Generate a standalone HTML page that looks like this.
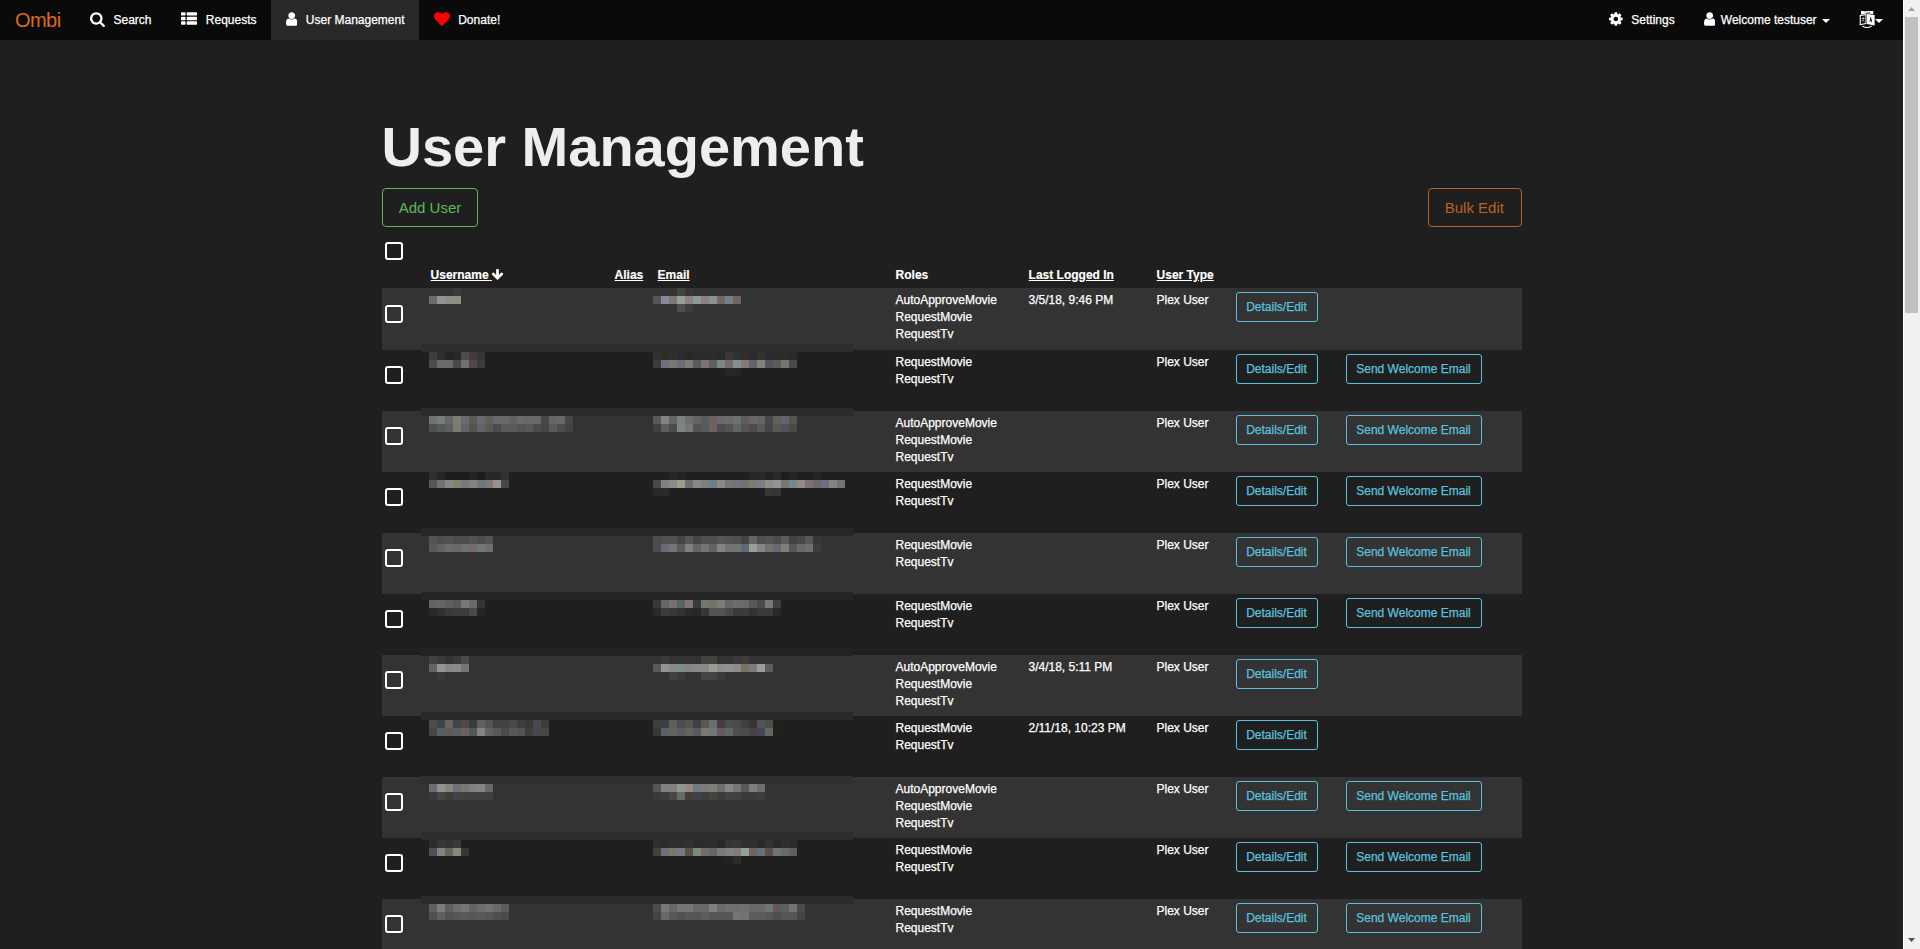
<!DOCTYPE html>
<html lang="en">
<head>
<meta charset="utf-8">
<title>Ombi - User Management</title>
<style>
*{box-sizing:border-box}
html,body{margin:0;padding:0}
html{overflow:hidden}
body{width:1920px;height:949px;overflow:hidden;background:#1f1f1f;color:#fff;font-family:"Liberation Sans",Arial,Helvetica,sans-serif;font-size:12px;line-height:17px;position:relative}
a{color:inherit;text-decoration:none}
#nav .it,#tbl{-webkit-text-stroke:.25px currentColor}
#tbl th{-webkit-text-stroke:.15px currentColor}
/* navbar */
#nav{position:absolute;left:0;top:0;width:1903px;height:40px;background:#0a0a0a}
#nav .brand{position:absolute;left:15px;top:0;height:40px;line-height:40px;font-size:20px;letter-spacing:-.55px;color:#df691a}
#nav .it{position:absolute;top:0;height:40px;line-height:40px;font-size:12px;color:#fff;white-space:nowrap}
#nav .it.active{background:#282828}
#nav .it span{position:absolute;top:0;left:0}
#nav svg{position:absolute;display:block;fill:#fff}
#nav .caret{position:absolute;top:19px;width:0;height:0;border-top:4px solid #fff;border-left:4px solid transparent;border-right:4px solid transparent}
/* scrollbar */
#sb{position:absolute;left:1903px;top:0;width:17px;height:949px;background:#f1f1f1;border-left:1px solid #fff}
#sb .thumb{position:absolute;left:1px;top:17px;width:13px;height:296px;background:#c1c1c1}
#sb svg{position:absolute;left:4px}
/* page */
h1{position:absolute;left:381.5px;top:114px;margin:0;font-size:56px;line-height:66px;font-weight:bold;color:#eee;white-space:nowrap}
.btn{position:absolute;display:block;border:1px solid;border-radius:4px;font-size:15px;text-align:center;background:transparent}
#add{left:382px;top:188px;width:96px;height:39px;line-height:37px;color:#5cb85c;border-color:#5cb85c}
#bulk{left:1428px;top:188px;width:94px;height:39px;line-height:37px;padding-right:1.4px;color:#bd6020;border-color:#bd6020}
.cb{position:absolute;left:385px;width:18px;height:18px;border:2px solid #fff;border-radius:3px}
.cbx{display:block;width:18px;height:18px;border:2px solid #fff;border-radius:3px;margin:12px 0 0 -5.5px}
tr.r1 .cbx{margin-top:13px}
/* table */
#tbl{position:absolute;left:381.5px;top:236px;width:1140px;border-collapse:collapse;table-layout:fixed;font-size:12px;line-height:17px}
#tbl th,#tbl td{padding:0 0 0 8px;vertical-align:top;text-align:left;font-weight:normal;overflow:hidden;white-space:nowrap}
#tbl th{font-weight:bold;height:52px;vertical-align:bottom;padding-bottom:4px;padding-left:9.1px}
#tbl th a{text-decoration:underline}
#tbl td{padding-top:4px;padding-left:9px}
#tbl td.b{padding-left:8px}
#tbl tr.r{height:61px}
#tbl tr.r1{height:62px}
#tbl tr.o{background:#333}
.sm{display:inline-block;height:30px;line-height:28px;border:1px solid #5bc0de;border-radius:3px;color:#5bc0de;font-size:12px;padding:0;margin-top:0;text-align:center;width:82px}
.sm.w{width:136px}
#mz{position:absolute;left:421px;top:288px;display:block}
</style>
</head>
<body>
<div id="nav">
  <a class="brand">Ombi</a>
<a class="it" style="left:75px;width:91px"><svg viewBox="0 0 1664 1792" width="14.86" height="16" style="left:15.0px;top:11px"><path d="M1152 832q0-185-131.500-316.500t-316.500-131.500-316.500 131.500-131.500 316.500 131.500 316.500 316.500 131.500 316.500-131.500 131.500-316.500zM1664 1664q0 52-38 90t-90 38q-54 0-90-38l-343-342q-179 124-399 124-143 0-273.500-55.500t-225-150-150-225-55.500-273.500 55.500-273.500 150-225 225-150 273.500-55.500 273.500 55.500 225 150 150 225 55.500 273.500q0 220-124 399l343 343q37 37 37 90z"/></svg><span style="left:38.5px">Search</span></a>
<a class="it" style="left:166px;width:105px"><svg viewBox="0 0 1792 1792" width="16.00" height="16" style="left:15.0px;top:11px"><path d="M512 1248v192q0 40-28 68t-68 28h-320q-40 0-68-28t-28-68v-192q0-40 28-68t68-28h320q40 0 68 28t28 68zM512 736v192q0 40-28 68t-68 28h-320q-40 0-68-28t-28-68v-192q0-40 28-68t68-28h320q40 0 68 28t28 68zM1792 1248v192q0 40-28 68t-68 28h-960q-40 0-68-28t-28-68v-192q0-40 28-68t68-28h960q40 0 68 28t28 68zM512 224v192q0 40-28 68t-68 28h-320q-40 0-68-28t-28-68v-192q0-40 28-68t68-28h320q40 0 68 28t28 68zM1792 736v192q0 40-28 68t-68 28h-960q-40 0-68-28t-28-68v-192q0-40 28-68t68-28h960q40 0 68 28t28 68zM1792 224v192q0 40-28 68t-68 28h-960q-40 0-68-28t-28-68v-192q0-40 28-68t68-28h960q40 0 68 28t28 68z"/></svg><span style="left:39.8px">Requests</span></a>
<a class="it active" style="left:271px;width:148px"><svg viewBox="0 0 1280 1792" width="11.43" height="16" style="left:15.0px;top:11px"><path d="M1280 1399q0 109-62.500 187t-150.500 78h-854q-88 0-150.500-78t-62.500-187q0-85 8.500-160.500t31.500-152 58.500-131 94-89 134.500-34.500q131 128 313 128t313-128q76 0 134.500 34.500t94 89 58.500 131 31.500 152 8.500 160.500zM1024 512q0 159-112.500 271.500t-271.500 112.500-271.500-112.500-112.500-271.500 112.500-271.500 271.500-112.500 271.500 112.500 112.500 271.500z"/></svg><span style="left:34.8px">User Management</span></a>
<a class="it" style="left:419px;width:96px"><svg viewBox="0 0 1792 1792" width="16.00" height="16" style="left:15.0px;top:11px;fill:#f00"><path d="M896 1664q-26 0-44-18l-624-602q-10-8-27.500-26t-55.500-65.500-68-97.500-53.500-121-23.500-138q0-220 127-344t351-124q62 0 126.500 21.500t120 58 95.500 68.500 76 68q36-36 76-68t95.500-68.500 120-58 126.500-21.500q224 0 351 124t127 344q0 221-229 450l-623 600q-18 18-44 18z"/></svg><span style="left:39.2px">Donate!</span></a>
<a class="it" style="left:1594px;width:95px"><svg viewBox="0 0 1536 1792" width="13.71" height="16" style="left:15.0px;top:11px"><path d="M1024 896q0-106-75-181t-181-75-181 75-75 181 75 181 181 75 181-75 75-181zM1536 787v222q0 12-8 23t-20 13l-185 28q-19 54-39 91 35 50 107 138 10 12 10 25t-9 23q-27 37-99 108t-94 71q-12 0-26-9l-138-108q-44 23-91 38-16 136-29 186-7 28-36 28h-222q-14 0-24.500-8.500t-11.500-21.500l-28-184q-49-16-90-37l-141 107q-10 9-25 9-14 0-25-11-126-114-165-168-7-10-7-23 0-12 8-23 15-21 51-66.500t54-70.500q-27-50-41-99l-183-27q-13-2-21-12.500t-8-23.500v-222q0-12 8-23t19-13l186-28q14-46 39-92-40-57-107-138-10-12-10-24 0-10 9-23 26-36 98.500-107.500t94.500-71.500q13 0 26 10l138 107q44-23 91-38 16-136 29-186 7-28 36-28h222q14 0 24.500 8.500t11.500 21.500l28 184q49 16 90 37l142-107q9-9 24-9 13 0 25 10 129 119 165 170 7 8 7 22 0 12-8 23-15 21-51 66.500t-54 70.500q26 50 41 98l183 28q13 2 21 12.500t8 23.500z"/></svg><span style="left:37.3px">Settings</span></a>
<a class="it" style="left:1689px;width:156px"><svg viewBox="0 0 1280 1792" width="11.43" height="16" style="left:15.0px;top:11px"><path d="M1280 1399q0 109-62.500 187t-150.500 78h-854q-88 0-150.500-78t-62.500-187q0-85 8.500-160.500t31.500-152 58.500-131 94-89 134.500-34.500q131 128 313 128t313-128q76 0 134.500 34.500t94 89 58.500 131 31.500 152 8.500 160.500zM1024 512q0 159-112.500 271.500t-271.500 112.500-271.500-112.500-112.500-271.500 112.500-271.500 271.500-112.500 271.500 112.500 112.500 271.500z"/></svg><span style="left:31.8px">Welcome testuser</span><b class="caret" style="left:133px"></b></a>
<a class="it" style="left:1845px;width:58px"><svg viewBox="0 0 16 18" width="16" height="18" style="left:13.5px;top:10.3px"><path d="M2 1.1 L14.2 1.1 L14.2 4.2 L8.3 3.2 L2 4.4Z M4 1.1 L4.9 1.1 L11.6 2.7 L10.6 3Z" fill-rule="evenodd"/><path d="M8 3.9 L15.6 5.1 L15.6 15.4 L8 14Z M10.5 11.9 L11.8 6.2 L13.2 12.3 L12.5 12.2 L12.2 10.9 L11.4 10.8 L11.15 12Z" fill-rule="evenodd"/><path d="M0.7 5.1 L7.5 4 L7.5 13.9 L0.7 15.2Z M1.8 6 L1.8 13.9 L6.5 13 L6.5 5.2Z" fill-rule="evenodd"/><path d="M2.6 8.3 L5.8 7.7 L5.8 8.4 L2.6 9Z M4.6 6.7 L5.3 6.6 L4.4 10.1 L3.2 11.7 L2.8 11.3 L3.9 9.7Z M3 9.7 L5.6 11.1 L5.4 11.7 L2.8 10.3Z" opacity=".8"/><path d="M3.6 15.6 Q8 18.6 12.4 15.6 L12.9 16.4 Q8 19.6 3.1 16.4Z"/></svg><b class="caret" style="left:30px"></b></a>
</div>
<div id="sb"><div class="thumb"></div><svg width="7" height="4" style="top:7px" viewBox="0 0 8 4" preserveAspectRatio="none"><path d="M0 4L4 0L8 4Z" fill="#a3a3a3"/></svg><svg width="7" height="4" style="top:938px" viewBox="0 0 8 4" preserveAspectRatio="none"><path d="M0 0L4 4L8 0Z" fill="#505050"/></svg></div>
<h1>User Management</h1>
<a class="btn" id="add">Add User</a>
<a class="btn" id="bulk">Bulk Edit</a>
<span class="cb" style="top:242px"></span>
<table id="tbl">
<colgroup><col style="width:40px"><col style="width:184px"><col style="width:43px"><col style="width:238px"><col style="width:133px"><col style="width:128px"><col style="width:80px"><col style="width:110px"><col style="width:184px"></colgroup>
<thead><tr><th></th><th><a>Username </a><svg viewBox="0 0 1792 1792" width="13" height="13" style="fill:#fff;vertical-align:-2.4px;margin-left:-1.2px"><path d="M1675 832q0 53-37 90l-651 652q-39 37-91 37-53 0-90-37l-651-652q-38-36-38-90 0-53 38-91l74-75q39-37 91-37 53 0 90 37l294 294v-704q0-52 38-90t90-38h128q52 0 90 38t38 90v704l294-294q37-37 90-37 52 0 91 37l75 75q37 39 37 91z"/></svg></th><th><a>Alias</a></th><th><a>Email</a></th><th>Roles</th><th><a>Last Logged In</a></th><th><a>User Type</a></th><th></th><th></th></tr></thead>
<tbody id="tb">
<tr class="r r1 o"><td><span class="cbx"></span></td><td></td><td></td><td></td><td><div>AutoApproveMovie</div><div>RequestMovie</div><div>RequestTv</div></td><td>3/5/18, 9:46 PM</td><td>Plex User</td><td class="b"><a class="sm">Details/Edit</a></td><td></td></tr>
<tr class="r"><td><span class="cbx"></span></td><td></td><td></td><td></td><td><div>RequestMovie</div><div>RequestTv</div></td><td></td><td>Plex User</td><td class="b"><a class="sm">Details/Edit</a></td><td class="b"><a class="sm w">Send Welcome Email</a></td></tr>
<tr class="r o"><td><span class="cbx"></span></td><td></td><td></td><td></td><td><div>AutoApproveMovie</div><div>RequestMovie</div><div>RequestTv</div></td><td></td><td>Plex User</td><td class="b"><a class="sm">Details/Edit</a></td><td class="b"><a class="sm w">Send Welcome Email</a></td></tr>
<tr class="r"><td><span class="cbx"></span></td><td></td><td></td><td></td><td><div>RequestMovie</div><div>RequestTv</div></td><td></td><td>Plex User</td><td class="b"><a class="sm">Details/Edit</a></td><td class="b"><a class="sm w">Send Welcome Email</a></td></tr>
<tr class="r o"><td><span class="cbx"></span></td><td></td><td></td><td></td><td><div>RequestMovie</div><div>RequestTv</div></td><td></td><td>Plex User</td><td class="b"><a class="sm">Details/Edit</a></td><td class="b"><a class="sm w">Send Welcome Email</a></td></tr>
<tr class="r"><td><span class="cbx"></span></td><td></td><td></td><td></td><td><div>RequestMovie</div><div>RequestTv</div></td><td></td><td>Plex User</td><td class="b"><a class="sm">Details/Edit</a></td><td class="b"><a class="sm w">Send Welcome Email</a></td></tr>
<tr class="r o"><td><span class="cbx"></span></td><td></td><td></td><td></td><td><div>AutoApproveMovie</div><div>RequestMovie</div><div>RequestTv</div></td><td>3/4/18, 5:11 PM</td><td>Plex User</td><td class="b"><a class="sm">Details/Edit</a></td><td></td></tr>
<tr class="r"><td><span class="cbx"></span></td><td></td><td></td><td></td><td><div>RequestMovie</div><div>RequestTv</div></td><td>2/11/18, 10:23 PM</td><td>Plex User</td><td class="b"><a class="sm">Details/Edit</a></td><td></td></tr>
<tr class="r o"><td><span class="cbx"></span></td><td></td><td></td><td></td><td><div>AutoApproveMovie</div><div>RequestMovie</div><div>RequestTv</div></td><td></td><td>Plex User</td><td class="b"><a class="sm">Details/Edit</a></td><td class="b"><a class="sm w">Send Welcome Email</a></td></tr>
<tr class="r"><td><span class="cbx"></span></td><td></td><td></td><td></td><td><div>RequestMovie</div><div>RequestTv</div></td><td></td><td>Plex User</td><td class="b"><a class="sm">Details/Edit</a></td><td class="b"><a class="sm w">Send Welcome Email</a></td></tr>
<tr class="r o"><td><span class="cbx"></span></td><td></td><td></td><td></td><td><div>RequestMovie</div><div>RequestTv</div></td><td></td><td>Plex User</td><td class="b"><a class="sm">Details/Edit</a></td><td class="b"><a class="sm w">Send Welcome Email</a></td></tr>
</tbody>
</table>
<svg id="mz" width="432" height="661" viewBox="0 0 432 661" shape-rendering="crispEdges"><rect x="0" y="56" width="432" height="8" fill="#2e2e2e"/><rect x="0" y="120" width="432" height="8" fill="#2c2c2c"/><rect x="0" y="240" width="432" height="8" fill="#262626"/><rect x="0" y="304" width="432" height="8" fill="#242424"/><rect x="0" y="360" width="432" height="8" fill="#222222"/><rect x="0" y="424" width="432" height="8" fill="#292929"/><rect x="0" y="488" width="432" height="8" fill="#303030"/><rect x="0" y="544" width="432" height="8" fill="#2e2e2e"/><rect x="0" y="608" width="432" height="8" fill="#2c2c2c"/><rect x="32" y="0" width="8" height="8" fill="#3a3a3a"/><rect x="8" y="8" width="8" height="8" fill="#6b6b6d"/><rect x="16" y="8" width="8" height="8" fill="#8b9497"/><rect x="24" y="8" width="8" height="8" fill="#938b88"/><rect x="32" y="8" width="8" height="8" fill="#8d8f87"/><rect x="256" y="0" width="8" height="8" fill="#424443"/><rect x="264" y="0" width="8" height="8" fill="#393735"/><rect x="232" y="8" width="8" height="8" fill="#555557"/><rect x="240" y="8" width="8" height="8" fill="#858a96"/><rect x="248" y="8" width="8" height="8" fill="#7d7672"/><rect x="256" y="8" width="8" height="8" fill="#96a099"/><rect x="264" y="8" width="8" height="8" fill="#888284"/><rect x="272" y="8" width="8" height="8" fill="#8d9994"/><rect x="280" y="8" width="8" height="8" fill="#8b7f7f"/><rect x="288" y="8" width="8" height="8" fill="#8c908f"/><rect x="296" y="8" width="8" height="8" fill="#726764"/><rect x="304" y="8" width="8" height="8" fill="#767e89"/><rect x="312" y="8" width="8" height="8" fill="#72645f"/><rect x="256" y="16" width="8" height="8" fill="#4c4e4f"/><rect x="264" y="16" width="8" height="8" fill="#403e3b"/><rect x="8" y="64" width="8" height="8" fill="#3d3d3d"/><rect x="16" y="64" width="8" height="8" fill="#2f2f2d"/><rect x="24" y="64" width="8" height="8" fill="#262324"/><rect x="32" y="64" width="8" height="8" fill="#28282a"/><rect x="40" y="64" width="8" height="8" fill="#4a4c4b"/><rect x="48" y="64" width="8" height="8" fill="#3f3d3b"/><rect x="56" y="64" width="8" height="8" fill="#373737"/><rect x="8" y="72" width="8" height="8" fill="#514c4b"/><rect x="16" y="72" width="8" height="8" fill="#69696f"/><rect x="24" y="72" width="8" height="8" fill="#6a6a68"/><rect x="32" y="72" width="8" height="8" fill="#484a4f"/><rect x="40" y="72" width="8" height="8" fill="#6e7271"/><rect x="48" y="72" width="8" height="8" fill="#524745"/><rect x="56" y="72" width="8" height="8" fill="#3c3a3d"/><rect x="232" y="64" width="8" height="8" fill="#2d3333"/><rect x="240" y="64" width="8" height="8" fill="#2d2d29"/><rect x="248" y="64" width="8" height="8" fill="#302e2e"/><rect x="256" y="64" width="8" height="8" fill="#2b2b2b"/><rect x="264" y="64" width="8" height="8" fill="#292927"/><rect x="272" y="64" width="8" height="8" fill="#2b2b2b"/><rect x="280" y="64" width="8" height="8" fill="#2a2b2d"/><rect x="288" y="64" width="8" height="8" fill="#2c2b2a"/><rect x="296" y="64" width="8" height="8" fill="#282a29"/><rect x="304" y="64" width="8" height="8" fill="#373735"/><rect x="312" y="64" width="8" height="8" fill="#303231"/><rect x="320" y="64" width="8" height="8" fill="#2e2e2e"/><rect x="328" y="64" width="8" height="8" fill="#2b2b2b"/><rect x="336" y="64" width="8" height="8" fill="#333331"/><rect x="344" y="64" width="8" height="8" fill="#2b2b2d"/><rect x="352" y="64" width="8" height="8" fill="#2b2b2b"/><rect x="360" y="64" width="8" height="8" fill="#2c2c2c"/><rect x="368" y="64" width="8" height="8" fill="#2a2a2a"/><rect x="232" y="72" width="8" height="8" fill="#3a3c3b"/><rect x="240" y="72" width="8" height="8" fill="#6e717c"/><rect x="248" y="72" width="8" height="8" fill="#7a756f"/><rect x="256" y="72" width="8" height="8" fill="#6b6d72"/><rect x="264" y="72" width="8" height="8" fill="#7c7c70"/><rect x="272" y="72" width="8" height="8" fill="#5b5a5f"/><rect x="280" y="72" width="8" height="8" fill="#7a766d"/><rect x="288" y="72" width="8" height="8" fill="#605f64"/><rect x="296" y="72" width="8" height="8" fill="#7a8a80"/><rect x="304" y="72" width="8" height="8" fill="#756c6d"/><rect x="312" y="72" width="8" height="8" fill="#848d94"/><rect x="320" y="72" width="8" height="8" fill="#857a76"/><rect x="328" y="72" width="8" height="8" fill="#63656a"/><rect x="336" y="72" width="8" height="8" fill="#85807a"/><rect x="344" y="72" width="8" height="8" fill="#525662"/><rect x="352" y="72" width="8" height="8" fill="#625855"/><rect x="360" y="72" width="8" height="8" fill="#727676"/><rect x="368" y="72" width="8" height="8" fill="#514845"/><rect x="304" y="80" width="8" height="8" fill="#23262a"/><rect x="312" y="80" width="8" height="8" fill="#282526"/><rect x="8" y="128" width="8" height="8" fill="#6f7373"/><rect x="16" y="128" width="8" height="8" fill="#787c7c"/><rect x="24" y="128" width="8" height="8" fill="#686868"/><rect x="32" y="128" width="8" height="8" fill="#7b7d76"/><rect x="40" y="128" width="8" height="8" fill="#676b6b"/><rect x="48" y="128" width="8" height="8" fill="#5e5a56"/><rect x="56" y="128" width="8" height="8" fill="#686a6e"/><rect x="64" y="128" width="8" height="8" fill="#5f5f5b"/><rect x="72" y="128" width="8" height="8" fill="#69696b"/><rect x="80" y="128" width="8" height="8" fill="#686a69"/><rect x="88" y="128" width="8" height="8" fill="#5d6265"/><rect x="96" y="128" width="8" height="8" fill="#6a6a68"/><rect x="104" y="128" width="8" height="8" fill="#6a6866"/><rect x="112" y="128" width="8" height="8" fill="#686868"/><rect x="120" y="128" width="8" height="8" fill="#484848"/><rect x="128" y="128" width="8" height="8" fill="#636767"/><rect x="136" y="128" width="8" height="8" fill="#696866"/><rect x="144" y="128" width="8" height="8" fill="#464644"/><rect x="8" y="136" width="8" height="8" fill="#4e504f"/><rect x="16" y="136" width="8" height="8" fill="#555958"/><rect x="24" y="136" width="8" height="8" fill="#5f5e62"/><rect x="32" y="136" width="8" height="8" fill="#7a7c73"/><rect x="40" y="136" width="8" height="8" fill="#646466"/><rect x="48" y="136" width="8" height="8" fill="#57534f"/><rect x="56" y="136" width="8" height="8" fill="#61656a"/><rect x="64" y="136" width="8" height="8" fill="#595955"/><rect x="72" y="136" width="8" height="8" fill="#4a4b50"/><rect x="80" y="136" width="8" height="8" fill="#595955"/><rect x="88" y="136" width="8" height="8" fill="#595b5a"/><rect x="96" y="136" width="8" height="8" fill="#545454"/><rect x="104" y="136" width="8" height="8" fill="#585858"/><rect x="112" y="136" width="8" height="8" fill="#4e4c4a"/><rect x="120" y="136" width="8" height="8" fill="#454746"/><rect x="128" y="136" width="8" height="8" fill="#5a5c5b"/><rect x="136" y="136" width="8" height="8" fill="#4f4c49"/><rect x="144" y="136" width="8" height="8" fill="#414342"/><rect x="232" y="128" width="8" height="8" fill="#555b5b"/><rect x="240" y="128" width="8" height="8" fill="#838383"/><rect x="248" y="128" width="8" height="8" fill="#656366"/><rect x="256" y="128" width="8" height="8" fill="#7a827f"/><rect x="264" y="128" width="8" height="8" fill="#6e6e6c"/><rect x="272" y="128" width="8" height="8" fill="#666360"/><rect x="280" y="128" width="8" height="8" fill="#595c5f"/><rect x="288" y="128" width="8" height="8" fill="#6b6260"/><rect x="296" y="128" width="8" height="8" fill="#69696b"/><rect x="304" y="128" width="8" height="8" fill="#6b6b69"/><rect x="312" y="128" width="8" height="8" fill="#6a7273"/><rect x="320" y="128" width="8" height="8" fill="#5f5c5d"/><rect x="328" y="128" width="8" height="8" fill="#68686a"/><rect x="336" y="128" width="8" height="8" fill="#646464"/><rect x="344" y="128" width="8" height="8" fill="#47484a"/><rect x="352" y="128" width="8" height="8" fill="#62605b"/><rect x="360" y="128" width="8" height="8" fill="#646369"/><rect x="368" y="128" width="8" height="8" fill="#57554f"/><rect x="232" y="136" width="8" height="8" fill="#3e403f"/><rect x="240" y="136" width="8" height="8" fill="#5e5e5c"/><rect x="248" y="136" width="8" height="8" fill="#4c4c4e"/><rect x="256" y="136" width="8" height="8" fill="#80867f"/><rect x="264" y="136" width="8" height="8" fill="#777773"/><rect x="272" y="136" width="8" height="8" fill="#555354"/><rect x="280" y="136" width="8" height="8" fill="#555a5d"/><rect x="288" y="136" width="8" height="8" fill="#6c6360"/><rect x="296" y="136" width="8" height="8" fill="#4d4e50"/><rect x="304" y="136" width="8" height="8" fill="#545256"/><rect x="312" y="136" width="8" height="8" fill="#636561"/><rect x="320" y="136" width="8" height="8" fill="#5a5252"/><rect x="328" y="136" width="8" height="8" fill="#4b4b4b"/><rect x="336" y="136" width="8" height="8" fill="#59595b"/><rect x="344" y="136" width="8" height="8" fill="#434748"/><rect x="352" y="136" width="8" height="8" fill="#595955"/><rect x="360" y="136" width="8" height="8" fill="#525156"/><rect x="368" y="136" width="8" height="8" fill="#4a4a44"/><rect x="8" y="184" width="8" height="8" fill="#2d2f31"/><rect x="16" y="184" width="8" height="8" fill="#262624"/><rect x="24" y="184" width="8" height="8" fill="#1c1c1c"/><rect x="32" y="184" width="8" height="8" fill="#1c1c1c"/><rect x="40" y="184" width="8" height="8" fill="#1d1d1d"/><rect x="48" y="184" width="8" height="8" fill="#222222"/><rect x="56" y="184" width="8" height="8" fill="#1b1b1b"/><rect x="64" y="184" width="8" height="8" fill="#262827"/><rect x="72" y="184" width="8" height="8" fill="#272826"/><rect x="80" y="184" width="8" height="8" fill="#303231"/><rect x="8" y="192" width="8" height="8" fill="#5a5553"/><rect x="16" y="192" width="8" height="8" fill="#707173"/><rect x="24" y="192" width="8" height="8" fill="#82878d"/><rect x="32" y="192" width="8" height="8" fill="#888070"/><rect x="40" y="192" width="8" height="8" fill="#767a7b"/><rect x="48" y="192" width="8" height="8" fill="#868282"/><rect x="56" y="192" width="8" height="8" fill="#70797c"/><rect x="64" y="192" width="8" height="8" fill="#7c7a7d"/><rect x="72" y="192" width="8" height="8" fill="#9a9289"/><rect x="80" y="192" width="8" height="8" fill="#484848"/><rect x="248" y="184" width="8" height="8" fill="#25272a"/><rect x="256" y="184" width="8" height="8" fill="#232320"/><rect x="328" y="184" width="8" height="8" fill="#252826"/><rect x="336" y="184" width="8" height="8" fill="#282826"/><rect x="344" y="184" width="8" height="8" fill="#232323"/><rect x="352" y="184" width="8" height="8" fill="#292926"/><rect x="360" y="184" width="8" height="8" fill="#1d1d1d"/><rect x="368" y="184" width="8" height="8" fill="#222524"/><rect x="376" y="184" width="8" height="8" fill="#1e1e1e"/><rect x="384" y="184" width="8" height="8" fill="#1e1e1e"/><rect x="392" y="184" width="8" height="8" fill="#262626"/><rect x="232" y="192" width="8" height="8" fill="#48484a"/><rect x="240" y="192" width="8" height="8" fill="#7e8286"/><rect x="248" y="192" width="8" height="8" fill="#8b8b85"/><rect x="256" y="192" width="8" height="8" fill="#9e9c8d"/><rect x="264" y="192" width="8" height="8" fill="#6f6e74"/><rect x="272" y="192" width="8" height="8" fill="#868985"/><rect x="280" y="192" width="8" height="8" fill="#827d77"/><rect x="288" y="192" width="8" height="8" fill="#6f7f89"/><rect x="296" y="192" width="8" height="8" fill="#8e8a87"/><rect x="304" y="192" width="8" height="8" fill="#7a7570"/><rect x="312" y="192" width="8" height="8" fill="#73727f"/><rect x="320" y="192" width="8" height="8" fill="#72716c"/><rect x="328" y="192" width="8" height="8" fill="#7b7d78"/><rect x="336" y="192" width="8" height="8" fill="#7c7e87"/><rect x="344" y="192" width="8" height="8" fill="#938c82"/><rect x="352" y="192" width="8" height="8" fill="#8e9699"/><rect x="360" y="192" width="8" height="8" fill="#7d7772"/><rect x="368" y="192" width="8" height="8" fill="#738a92"/><rect x="376" y="192" width="8" height="8" fill="#8f8d88"/><rect x="384" y="192" width="8" height="8" fill="#807074"/><rect x="392" y="192" width="8" height="8" fill="#6c6a6b"/><rect x="400" y="192" width="8" height="8" fill="#6a7280"/><rect x="408" y="192" width="8" height="8" fill="#8a847a"/><rect x="416" y="192" width="8" height="8" fill="#747474"/><rect x="232" y="200" width="8" height="8" fill="#272a29"/><rect x="240" y="200" width="8" height="8" fill="#2a2a26"/><rect x="344" y="200" width="8" height="8" fill="#373737"/><rect x="352" y="200" width="8" height="8" fill="#363533"/><rect x="8" y="248" width="8" height="8" fill="#545454"/><rect x="16" y="248" width="8" height="8" fill="#4f4f4f"/><rect x="24" y="248" width="8" height="8" fill="#525252"/><rect x="32" y="248" width="8" height="8" fill="#4d4d49"/><rect x="40" y="248" width="8" height="8" fill="#494d4d"/><rect x="48" y="248" width="8" height="8" fill="#55514e"/><rect x="56" y="248" width="8" height="8" fill="#4c4d4f"/><rect x="64" y="248" width="8" height="8" fill="#565452"/><rect x="8" y="256" width="8" height="8" fill="#5a5858"/><rect x="16" y="256" width="8" height="8" fill="#616267"/><rect x="24" y="256" width="8" height="8" fill="#6c6b70"/><rect x="32" y="256" width="8" height="8" fill="#696a62"/><rect x="40" y="256" width="8" height="8" fill="#6a7274"/><rect x="48" y="256" width="8" height="8" fill="#756a6c"/><rect x="56" y="256" width="8" height="8" fill="#73767b"/><rect x="64" y="256" width="8" height="8" fill="#736d65"/><rect x="232" y="248" width="8" height="8" fill="#484e4e"/><rect x="240" y="248" width="8" height="8" fill="#50504e"/><rect x="248" y="248" width="8" height="8" fill="#51514f"/><rect x="256" y="248" width="8" height="8" fill="#474541"/><rect x="264" y="248" width="8" height="8" fill="#535856"/><rect x="272" y="248" width="8" height="8" fill="#464543"/><rect x="280" y="248" width="8" height="8" fill="#4f4f4f"/><rect x="288" y="248" width="8" height="8" fill="#505050"/><rect x="296" y="248" width="8" height="8" fill="#525858"/><rect x="304" y="248" width="8" height="8" fill="#545254"/><rect x="312" y="248" width="8" height="8" fill="#51514b"/><rect x="320" y="248" width="8" height="8" fill="#414546"/><rect x="328" y="248" width="8" height="8" fill="#656567"/><rect x="336" y="248" width="8" height="8" fill="#4e504f"/><rect x="344" y="248" width="8" height="8" fill="#535351"/><rect x="352" y="248" width="8" height="8" fill="#4c4c4c"/><rect x="360" y="248" width="8" height="8" fill="#5d5c5a"/><rect x="368" y="248" width="8" height="8" fill="#404244"/><rect x="376" y="248" width="8" height="8" fill="#484745"/><rect x="384" y="248" width="8" height="8" fill="#57585a"/><rect x="392" y="248" width="8" height="8" fill="#383735"/><rect x="232" y="256" width="8" height="8" fill="#4c4d4f"/><rect x="240" y="256" width="8" height="8" fill="#6a6b72"/><rect x="248" y="256" width="8" height="8" fill="#74757a"/><rect x="256" y="256" width="8" height="8" fill="#5f5b53"/><rect x="264" y="256" width="8" height="8" fill="#78827b"/><rect x="272" y="256" width="8" height="8" fill="#696369"/><rect x="280" y="256" width="8" height="8" fill="#77746f"/><rect x="288" y="256" width="8" height="8" fill="#626264"/><rect x="296" y="256" width="8" height="8" fill="#7d877e"/><rect x="304" y="256" width="8" height="8" fill="#757176"/><rect x="312" y="256" width="8" height="8" fill="#75756f"/><rect x="320" y="256" width="8" height="8" fill="#636878"/><rect x="328" y="256" width="8" height="8" fill="#98a092"/><rect x="336" y="256" width="8" height="8" fill="#82878a"/><rect x="344" y="256" width="8" height="8" fill="#76716b"/><rect x="352" y="256" width="8" height="8" fill="#636b70"/><rect x="360" y="256" width="8" height="8" fill="#7f7d76"/><rect x="368" y="256" width="8" height="8" fill="#535756"/><rect x="376" y="256" width="8" height="8" fill="#696969"/><rect x="384" y="256" width="8" height="8" fill="#6c7073"/><rect x="392" y="256" width="8" height="8" fill="#3f3d39"/><rect x="8" y="312" width="8" height="8" fill="#646262"/><rect x="16" y="312" width="8" height="8" fill="#626665"/><rect x="24" y="312" width="8" height="8" fill="#5e5e5e"/><rect x="32" y="312" width="8" height="8" fill="#5a5858"/><rect x="40" y="312" width="8" height="8" fill="#737a7d"/><rect x="48" y="312" width="8" height="8" fill="#6e6a61"/><rect x="56" y="312" width="8" height="8" fill="#353432"/><rect x="8" y="320" width="8" height="8" fill="#2a2829"/><rect x="16" y="320" width="8" height="8" fill="#2b3133"/><rect x="24" y="320" width="8" height="8" fill="#3a3839"/><rect x="32" y="320" width="8" height="8" fill="#3d3c38"/><rect x="40" y="320" width="8" height="8" fill="#3c3c3e"/><rect x="48" y="320" width="8" height="8" fill="#454a4a"/><rect x="56" y="320" width="8" height="8" fill="#262321"/><rect x="232" y="312" width="8" height="8" fill="#36383a"/><rect x="240" y="312" width="8" height="8" fill="#626668"/><rect x="248" y="312" width="8" height="8" fill="#74726a"/><rect x="256" y="312" width="8" height="8" fill="#566468"/><rect x="264" y="312" width="8" height="8" fill="#7d7370"/><rect x="272" y="312" width="8" height="8" fill="#343a3e"/><rect x="280" y="312" width="8" height="8" fill="#747672"/><rect x="288" y="312" width="8" height="8" fill="#73756d"/><rect x="296" y="312" width="8" height="8" fill="#7b7d7a"/><rect x="304" y="312" width="8" height="8" fill="#656762"/><rect x="312" y="312" width="8" height="8" fill="#666c70"/><rect x="320" y="312" width="8" height="8" fill="#6f6966"/><rect x="328" y="312" width="8" height="8" fill="#555a56"/><rect x="336" y="312" width="8" height="8" fill="#4b4b4b"/><rect x="344" y="312" width="8" height="8" fill="#747a79"/><rect x="352" y="312" width="8" height="8" fill="#403f3c"/><rect x="232" y="320" width="8" height="8" fill="#282a2d"/><rect x="240" y="320" width="8" height="8" fill="#3c3c3c"/><rect x="248" y="320" width="8" height="8" fill="#3a3836"/><rect x="256" y="320" width="8" height="8" fill="#303332"/><rect x="264" y="320" width="8" height="8" fill="#2b2927"/><rect x="272" y="320" width="8" height="8" fill="#25282b"/><rect x="280" y="320" width="8" height="8" fill="#363633"/><rect x="288" y="320" width="8" height="8" fill="#4f5557"/><rect x="296" y="320" width="8" height="8" fill="#545251"/><rect x="304" y="320" width="8" height="8" fill="#4a4842"/><rect x="312" y="320" width="8" height="8" fill="#373a40"/><rect x="320" y="320" width="8" height="8" fill="#3e393a"/><rect x="328" y="320" width="8" height="8" fill="#303332"/><rect x="336" y="320" width="8" height="8" fill="#3a3a3a"/><rect x="344" y="320" width="8" height="8" fill="#3b3a36"/><rect x="352" y="320" width="8" height="8" fill="#282828"/><rect x="8" y="368" width="8" height="8" fill="#424244"/><rect x="16" y="368" width="8" height="8" fill="#3a3a38"/><rect x="24" y="368" width="8" height="8" fill="#323232"/><rect x="32" y="368" width="8" height="8" fill="#3a3a3c"/><rect x="40" y="368" width="8" height="8" fill="#4d4b48"/><rect x="8" y="376" width="8" height="8" fill="#626367"/><rect x="16" y="376" width="8" height="8" fill="#949292"/><rect x="24" y="376" width="8" height="8" fill="#848984"/><rect x="32" y="376" width="8" height="8" fill="#868b8f"/><rect x="40" y="376" width="8" height="8" fill="#7a7573"/><rect x="16" y="384" width="8" height="8" fill="#383838"/><rect x="240" y="368" width="8" height="8" fill="#393939"/><rect x="280" y="368" width="8" height="8" fill="#414342"/><rect x="288" y="368" width="8" height="8" fill="#434341"/><rect x="312" y="368" width="8" height="8" fill="#39393b"/><rect x="320" y="368" width="8" height="8" fill="#3e3e38"/><rect x="232" y="376" width="8" height="8" fill="#545a5e"/><rect x="240" y="376" width="8" height="8" fill="#94938d"/><rect x="248" y="376" width="8" height="8" fill="#8a8886"/><rect x="256" y="376" width="8" height="8" fill="#7f8c8d"/><rect x="264" y="376" width="8" height="8" fill="#868580"/><rect x="272" y="376" width="8" height="8" fill="#89878c"/><rect x="280" y="376" width="8" height="8" fill="#888982"/><rect x="288" y="376" width="8" height="8" fill="#9a9a96"/><rect x="296" y="376" width="8" height="8" fill="#8f8d8a"/><rect x="304" y="376" width="8" height="8" fill="#8a9294"/><rect x="312" y="376" width="8" height="8" fill="#93888e"/><rect x="320" y="376" width="8" height="8" fill="#757462"/><rect x="328" y="376" width="8" height="8" fill="#7a7b7d"/><rect x="336" y="376" width="8" height="8" fill="#9d9e96"/><rect x="344" y="376" width="8" height="8" fill="#5e5d5b"/><rect x="248" y="384" width="8" height="8" fill="#3f3f3f"/><rect x="256" y="384" width="8" height="8" fill="#3a3a3a"/><rect x="280" y="384" width="8" height="8" fill="#424446"/><rect x="288" y="384" width="8" height="8" fill="#454545"/><rect x="296" y="384" width="8" height="8" fill="#3b3a38"/><rect x="8" y="432" width="8" height="8" fill="#4d4d49"/><rect x="16" y="432" width="8" height="8" fill="#3c454c"/><rect x="24" y="432" width="8" height="8" fill="#6a625d"/><rect x="32" y="432" width="8" height="8" fill="#3a454d"/><rect x="40" y="432" width="8" height="8" fill="#524846"/><rect x="48" y="432" width="8" height="8" fill="#3c3c3c"/><rect x="56" y="432" width="8" height="8" fill="#606060"/><rect x="64" y="432" width="8" height="8" fill="#545355"/><rect x="72" y="432" width="8" height="8" fill="#42413d"/><rect x="80" y="432" width="8" height="8" fill="#404345"/><rect x="88" y="432" width="8" height="8" fill="#4b4a48"/><rect x="96" y="432" width="8" height="8" fill="#3e3e40"/><rect x="104" y="432" width="8" height="8" fill="#383838"/><rect x="112" y="432" width="8" height="8" fill="#48494b"/><rect x="120" y="432" width="8" height="8" fill="#3d3b39"/><rect x="8" y="440" width="8" height="8" fill="#464642"/><rect x="16" y="440" width="8" height="8" fill="#555f5e"/><rect x="24" y="440" width="8" height="8" fill="#5f5a56"/><rect x="32" y="440" width="8" height="8" fill="#586060"/><rect x="40" y="440" width="8" height="8" fill="#67645f"/><rect x="48" y="440" width="8" height="8" fill="#50585a"/><rect x="56" y="440" width="8" height="8" fill="#878381"/><rect x="64" y="440" width="8" height="8" fill="#626262"/><rect x="72" y="440" width="8" height="8" fill="#5c585a"/><rect x="80" y="440" width="8" height="8" fill="#484b4f"/><rect x="88" y="440" width="8" height="8" fill="#56595b"/><rect x="96" y="440" width="8" height="8" fill="#57534f"/><rect x="104" y="440" width="8" height="8" fill="#423d39"/><rect x="112" y="440" width="8" height="8" fill="#44474e"/><rect x="120" y="440" width="8" height="8" fill="#4b4844"/><rect x="232" y="432" width="8" height="8" fill="#3d3d3b"/><rect x="240" y="432" width="8" height="8" fill="#3a3f43"/><rect x="248" y="432" width="8" height="8" fill="#5e605d"/><rect x="256" y="432" width="8" height="8" fill="#4b4d52"/><rect x="264" y="432" width="8" height="8" fill="#545452"/><rect x="272" y="432" width="8" height="8" fill="#403f45"/><rect x="280" y="432" width="8" height="8" fill="#5a5853"/><rect x="288" y="432" width="8" height="8" fill="#686e6f"/><rect x="296" y="432" width="8" height="8" fill="#4a3d3d"/><rect x="304" y="432" width="8" height="8" fill="#474f50"/><rect x="312" y="432" width="8" height="8" fill="#4d4b48"/><rect x="320" y="432" width="8" height="8" fill="#404144"/><rect x="328" y="432" width="8" height="8" fill="#3a3534"/><rect x="336" y="432" width="8" height="8" fill="#4f5559"/><rect x="344" y="432" width="8" height="8" fill="#4e4f4a"/><rect x="352" y="432" width="8" height="8" fill="#221f1e"/><rect x="232" y="440" width="8" height="8" fill="#373735"/><rect x="240" y="440" width="8" height="8" fill="#5c5e63"/><rect x="248" y="440" width="8" height="8" fill="#616259"/><rect x="256" y="440" width="8" height="8" fill="#5c5c60"/><rect x="264" y="440" width="8" height="8" fill="#636561"/><rect x="272" y="440" width="8" height="8" fill="#565b5e"/><rect x="280" y="440" width="8" height="8" fill="#787972"/><rect x="288" y="440" width="8" height="8" fill="#747675"/><rect x="296" y="440" width="8" height="8" fill="#625a60"/><rect x="304" y="440" width="8" height="8" fill="#5d6565"/><rect x="312" y="440" width="8" height="8" fill="#524e4e"/><rect x="320" y="440" width="8" height="8" fill="#4e4c4b"/><rect x="328" y="440" width="8" height="8" fill="#474341"/><rect x="336" y="440" width="8" height="8" fill="#444558"/><rect x="344" y="440" width="8" height="8" fill="#66675f"/><rect x="352" y="440" width="8" height="8" fill="#221f1e"/><rect x="8" y="496" width="8" height="8" fill="#6d6b7a"/><rect x="16" y="496" width="8" height="8" fill="#8f9389"/><rect x="24" y="496" width="8" height="8" fill="#85867e"/><rect x="32" y="496" width="8" height="8" fill="#697377"/><rect x="40" y="496" width="8" height="8" fill="#7e7470"/><rect x="48" y="496" width="8" height="8" fill="#7d8180"/><rect x="56" y="496" width="8" height="8" fill="#85837e"/><rect x="64" y="496" width="8" height="8" fill="#686868"/><rect x="8" y="504" width="8" height="8" fill="#39393d"/><rect x="16" y="504" width="8" height="8" fill="#454545"/><rect x="24" y="504" width="8" height="8" fill="#3d3d3b"/><rect x="32" y="504" width="8" height="8" fill="#424242"/><rect x="40" y="504" width="8" height="8" fill="#414141"/><rect x="48" y="504" width="8" height="8" fill="#404040"/><rect x="56" y="504" width="8" height="8" fill="#413f40"/><rect x="64" y="504" width="8" height="8" fill="#3f3f3f"/><rect x="232" y="496" width="8" height="8" fill="#555553"/><rect x="240" y="496" width="8" height="8" fill="#7e8188"/><rect x="248" y="496" width="8" height="8" fill="#827f7c"/><rect x="256" y="496" width="8" height="8" fill="#8e9993"/><rect x="264" y="496" width="8" height="8" fill="#958a84"/><rect x="272" y="496" width="8" height="8" fill="#6c7c82"/><rect x="280" y="496" width="8" height="8" fill="#7f7a78"/><rect x="288" y="496" width="8" height="8" fill="#807e75"/><rect x="296" y="496" width="8" height="8" fill="#687073"/><rect x="304" y="496" width="8" height="8" fill="#898582"/><rect x="312" y="496" width="8" height="8" fill="#76777b"/><rect x="320" y="496" width="8" height="8" fill="#5b5955"/><rect x="328" y="496" width="8" height="8" fill="#797d85"/><rect x="336" y="496" width="8" height="8" fill="#736d68"/><rect x="232" y="504" width="8" height="8" fill="#393939"/><rect x="240" y="504" width="8" height="8" fill="#3b3b3b"/><rect x="248" y="504" width="8" height="8" fill="#434849"/><rect x="256" y="504" width="8" height="8" fill="#696969"/><rect x="264" y="504" width="8" height="8" fill="#433d3b"/><rect x="272" y="504" width="8" height="8" fill="#404244"/><rect x="280" y="504" width="8" height="8" fill="#3b3f3e"/><rect x="288" y="504" width="8" height="8" fill="#444444"/><rect x="296" y="504" width="8" height="8" fill="#3e3c3a"/><rect x="304" y="504" width="8" height="8" fill="#404245"/><rect x="312" y="504" width="8" height="8" fill="#434140"/><rect x="320" y="504" width="8" height="8" fill="#3b3a38"/><rect x="328" y="504" width="8" height="8" fill="#3b3b3b"/><rect x="336" y="504" width="8" height="8" fill="#3d3d3d"/><rect x="8" y="552" width="8" height="8" fill="#2d2b32"/><rect x="16" y="552" width="8" height="8" fill="#383733"/><rect x="24" y="552" width="8" height="8" fill="#333331"/><rect x="32" y="552" width="8" height="8" fill="#3a3a38"/><rect x="8" y="560" width="8" height="8" fill="#504d58"/><rect x="16" y="560" width="8" height="8" fill="#7f827d"/><rect x="24" y="560" width="8" height="8" fill="#666660"/><rect x="32" y="560" width="8" height="8" fill="#8b8680"/><rect x="40" y="560" width="8" height="8" fill="#383735"/><rect x="232" y="552" width="8" height="8" fill="#2c302f"/><rect x="240" y="552" width="8" height="8" fill="#2c2c2c"/><rect x="248" y="552" width="8" height="8" fill="#302f2c"/><rect x="256" y="552" width="8" height="8" fill="#2c2e30"/><rect x="264" y="552" width="8" height="8" fill="#34312c"/><rect x="272" y="552" width="8" height="8" fill="#2a2d30"/><rect x="280" y="552" width="8" height="8" fill="#2c2c2c"/><rect x="288" y="552" width="8" height="8" fill="#2b2e2d"/><rect x="296" y="552" width="8" height="8" fill="#282828"/><rect x="304" y="552" width="8" height="8" fill="#343434"/><rect x="312" y="552" width="8" height="8" fill="#373634"/><rect x="320" y="552" width="8" height="8" fill="#2c2f2d"/><rect x="328" y="552" width="8" height="8" fill="#2f2f2f"/><rect x="336" y="552" width="8" height="8" fill="#232b2b"/><rect x="344" y="552" width="8" height="8" fill="#38312d"/><rect x="352" y="552" width="8" height="8" fill="#272a28"/><rect x="360" y="552" width="8" height="8" fill="#2d302e"/><rect x="368" y="552" width="8" height="8" fill="#2b2b2b"/><rect x="232" y="560" width="8" height="8" fill="#42423c"/><rect x="240" y="560" width="8" height="8" fill="#6c7079"/><rect x="248" y="560" width="8" height="8" fill="#7c766a"/><rect x="256" y="560" width="8" height="8" fill="#747a80"/><rect x="264" y="560" width="8" height="8" fill="#56524c"/><rect x="272" y="560" width="8" height="8" fill="#7c897e"/><rect x="280" y="560" width="8" height="8" fill="#736a66"/><rect x="288" y="560" width="8" height="8" fill="#66656d"/><rect x="296" y="560" width="8" height="8" fill="#7a7a7a"/><rect x="304" y="560" width="8" height="8" fill="#7f8380"/><rect x="312" y="560" width="8" height="8" fill="#7f7c7b"/><rect x="320" y="560" width="8" height="8" fill="#92a296"/><rect x="328" y="560" width="8" height="8" fill="#74625f"/><rect x="336" y="560" width="8" height="8" fill="#65707c"/><rect x="344" y="560" width="8" height="8" fill="#5e4f4b"/><rect x="352" y="560" width="8" height="8" fill="#727474"/><rect x="360" y="560" width="8" height="8" fill="#6b6a66"/><rect x="368" y="560" width="8" height="8" fill="#5f5f5f"/><rect x="304" y="568" width="8" height="8" fill="#1f2125"/><rect x="312" y="568" width="8" height="8" fill="#2d2c2a"/><rect x="8" y="616" width="8" height="8" fill="#5f5f5d"/><rect x="16" y="616" width="8" height="8" fill="#7b7d7c"/><rect x="24" y="616" width="8" height="8" fill="#62605e"/><rect x="32" y="616" width="8" height="8" fill="#6b6f72"/><rect x="40" y="616" width="8" height="8" fill="#767571"/><rect x="48" y="616" width="8" height="8" fill="#646464"/><rect x="56" y="616" width="8" height="8" fill="#6c6d6f"/><rect x="64" y="616" width="8" height="8" fill="#76746f"/><rect x="72" y="616" width="8" height="8" fill="#656a6d"/><rect x="80" y="616" width="8" height="8" fill="#5e5a55"/><rect x="8" y="624" width="8" height="8" fill="#4f5150"/><rect x="16" y="624" width="8" height="8" fill="#5f6062"/><rect x="24" y="624" width="8" height="8" fill="#545250"/><rect x="32" y="624" width="8" height="8" fill="#55565a"/><rect x="40" y="624" width="8" height="8" fill="#595855"/><rect x="48" y="624" width="8" height="8" fill="#575556"/><rect x="56" y="624" width="8" height="8" fill="#59595b"/><rect x="64" y="624" width="8" height="8" fill="#555555"/><rect x="72" y="624" width="8" height="8" fill="#4b5051"/><rect x="80" y="624" width="8" height="8" fill="#4e4a49"/><rect x="232" y="616" width="8" height="8" fill="#4a4c4e"/><rect x="240" y="616" width="8" height="8" fill="#777975"/><rect x="248" y="616" width="8" height="8" fill="#686764"/><rect x="256" y="616" width="8" height="8" fill="#737577"/><rect x="264" y="616" width="8" height="8" fill="#757575"/><rect x="272" y="616" width="8" height="8" fill="#676965"/><rect x="280" y="616" width="8" height="8" fill="#67686c"/><rect x="288" y="616" width="8" height="8" fill="#807e7b"/><rect x="296" y="616" width="8" height="8" fill="#686a6d"/><rect x="304" y="616" width="8" height="8" fill="#6f7169"/><rect x="312" y="616" width="8" height="8" fill="#6e6e70"/><rect x="320" y="616" width="8" height="8" fill="#72706b"/><rect x="328" y="616" width="8" height="8" fill="#68686c"/><rect x="336" y="616" width="8" height="8" fill="#696a66"/><rect x="344" y="616" width="8" height="8" fill="#6b7678"/><rect x="352" y="616" width="8" height="8" fill="#635a58"/><rect x="360" y="616" width="8" height="8" fill="#5a6060"/><rect x="368" y="616" width="8" height="8" fill="#787170"/><rect x="376" y="616" width="8" height="8" fill="#4b4b49"/><rect x="232" y="624" width="8" height="8" fill="#434445"/><rect x="240" y="624" width="8" height="8" fill="#666a69"/><rect x="248" y="624" width="8" height="8" fill="#58595b"/><rect x="256" y="624" width="8" height="8" fill="#54504c"/><rect x="264" y="624" width="8" height="8" fill="#565656"/><rect x="272" y="624" width="8" height="8" fill="#565654"/><rect x="280" y="624" width="8" height="8" fill="#5b5b5f"/><rect x="288" y="624" width="8" height="8" fill="#57554f"/><rect x="296" y="624" width="8" height="8" fill="#535557"/><rect x="304" y="624" width="8" height="8" fill="#555755"/><rect x="312" y="624" width="8" height="8" fill="#6f7778"/><rect x="320" y="624" width="8" height="8" fill="#73746d"/><rect x="328" y="624" width="8" height="8" fill="#5c5b60"/><rect x="336" y="624" width="8" height="8" fill="#5a5c57"/><rect x="344" y="624" width="8" height="8" fill="#525a59"/><rect x="352" y="624" width="8" height="8" fill="#4f4e4b"/><rect x="360" y="624" width="8" height="8" fill="#525859"/><rect x="368" y="624" width="8" height="8" fill="#5a5253"/><rect x="376" y="624" width="8" height="8" fill="#424544"/></svg>
</body>
</html>
